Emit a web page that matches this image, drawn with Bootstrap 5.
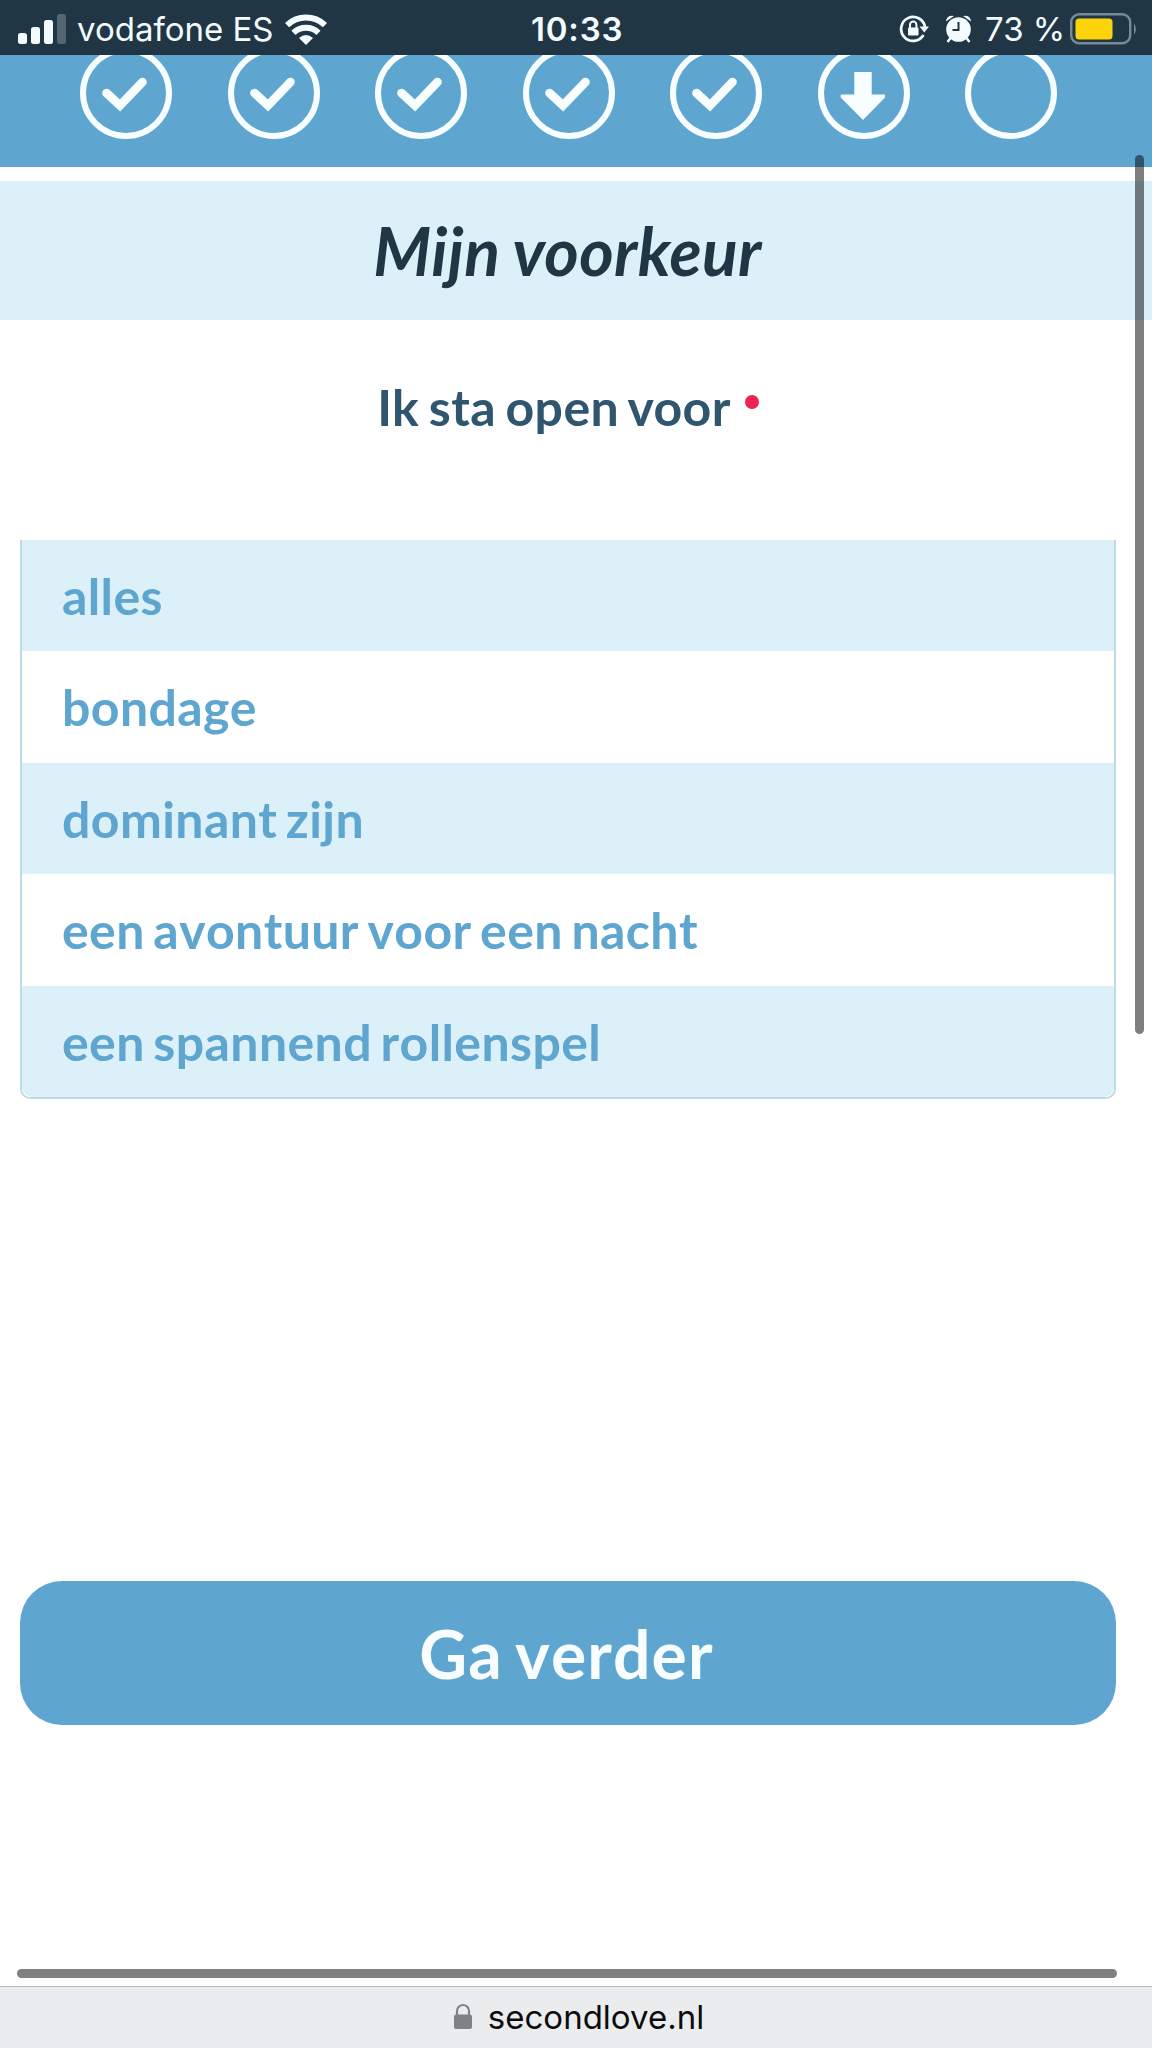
<!DOCTYPE html>
<html lang="nl">
<head>
<meta charset="utf-8">
<meta name="viewport" content="width=device-width, initial-scale=1">
<title>Mijn voorkeur</title>
<link href="https://cdn.jsdelivr.net/npm/bootstrap@5.3.0/dist/css/bootstrap.min.css" rel="stylesheet">
<style>
  body { font-family: Lato, "Open Sans", sans-serif; background: #fff; }
  .screen { width: 1152px; height: 2048px; }
  .status-bar { height: 55px; background: #203645; color: #f3fbff; font-family: Inter, "Liberation Sans", sans-serif; font-size: 33px; line-height: 55px; padding-top: 3px; }
  .status-side { flex: 1 1 0; }
  .status-left { padding-left: 18px; }
  .status-right { padding-right: 14px; }
  .carrier { width: 192px; margin-left: 11px; }
  .clock { width: 94px; padding-right: 3px; font-weight: 600; letter-spacing: .8px; }
  .level { width: 77px; margin-left: 13px; }
  .steps { height: 112px; background: #5ea6d0; padding: 0 95px 0 80px; }
  .step-ring { width: 92px; height: 92px; margin-top: -8px; }
  .title-band { height: 139px; margin-top: 14px; padding-right: 17px; background: #dcf0f9; color: #203645; }
  .title-band h1 { font-size: 66px; font-weight: 700; font-style: italic; line-height: 139px; letter-spacing: .35px; word-spacing: -1px; }
  .form-area { padding: 0 36px 0 20px; }
  .question { height: 220px; padding-top: 57px; color: #30566f; font-size: 50px; font-weight: 700; line-height: 60px; word-spacing: -3px; letter-spacing: .4px; }
  .required-dot { width: 14px; height: 14px; margin: 0 0 11px 14px; background: #ee2450; }
  .choices { height: 559px; border: 2px solid #bcdae7; border-top: 0; border-radius: 0 0 10px 10px; overflow: hidden; }
  .choices .list-group-item { flex: 1 1 0; border: 0; padding: 1px 0 0 40px; background: #fff; color: #5ea6d0; font-size: 50px; font-weight: 700; line-height: 110.400px; font-kerning: none; letter-spacing: .4px; word-spacing: -4px; }
  .choices .list-group-item:nth-child(odd) { background: #dcf0f9; }
  .next-btn { height: 144px; margin-top: 482px; border: 0; border-radius: 42px; background: #5ea6d0; color: #f8fdff; font-size: 66px; font-weight: 700; line-height: 1; font-kerning: none; letter-spacing: 1.100px; word-spacing: -5px; padding: 8px 15px 6px 12px; }
  .scroll-x { height: 9px; width: 1100px; margin: auto 0 8px 17px; background: #808080; }
  .address-bar { height: 62px; border-top: 1px solid #b5b8bb; background: #ebecee; color: #0c0c0e; font-family: Inter, "Liberation Sans", sans-serif; font-size: 33px; line-height: 58px; padding: 0 0 2px 6px; }
  .scroll-y { right: 8px; top: 155px; width: 9px; height: 879px; background: rgba(0,0,0,.5); }
</style>
</head>
<body>
<svg width="0" height="0" class="d-none">
  <symbol id="tick" viewBox="0 0 92 92"><circle cx="46" cy="46" r="43" fill="none" stroke="#f8feff" stroke-width="6"/><path d="M26.500 46 40 58.500 62.500 35" fill="none" stroke="#f8feff" stroke-width="8.600" stroke-linecap="round"/></symbol>
  <symbol id="arrow" viewBox="0 0 92 92"><circle cx="46" cy="46" r="43" fill="none" stroke="#f8feff" stroke-width="6"/><path d="M36.300 25h17.400v22.500H67v3L45 73 22.700 50.500v-3h13.600z" fill="#f8feff"/></symbol>
  <symbol id="ring" viewBox="0 0 92 92"><circle cx="46" cy="46" r="43" fill="none" stroke="#f8feff" stroke-width="6"/></symbol>
</svg>
<div class="screen position-relative overflow-hidden d-flex flex-column">
  <header class="status-bar d-flex align-items-center flex-shrink-0">
    <div class="status-side status-left d-flex align-items-center">
      <svg width="48" height="31" viewBox="0 0 48 31" fill="#f3fbff"><rect y="19" width="9" height="11" rx="2.500"/><rect x="13" y="13" width="9" height="17" rx="2.500"/><rect x="26" y="6" width="9" height="24" rx="2.500"/><rect x="39" y="0" width="9" height="30" rx="2.500" fill="#536673"/></svg>
      <span class="carrier text-nowrap">vodafone ES</span>
      <svg class="ms-3" width="42" height="31" viewBox="0 0 42 31" fill="none" stroke="#f3fbff" stroke-width="6"><path d="M2 11.200A27.500 27.500 0 0 1 40 11.200M8.500 18.800A18 18 0 0 1 33.500 18.800"/><path d="M14 24Q21 18 28 24L21 31z" fill="#f3fbff" stroke="none"/></svg>
    </div>
    <div class="clock text-nowrap text-center">10:33</div>
    <div class="status-side status-right d-flex align-items-center justify-content-end">
      <svg width="30" height="28" viewBox="0 0 30 28"><path d="M24.500 20A12 12 0 1 1 26 12" fill="none" stroke="#f3fbff" stroke-width="2.700"/><path d="M20.500 11.500H30L25.300 17.500z" fill="#f3fbff"/><rect x="9" y="12.500" width="10.500" height="8" rx="1" fill="#f3fbff"/><path d="M11 13v-3.200a3.200 3.200 0 0 1 6.400 0V13" fill="none" stroke="#f3fbff" stroke-width="2"/></svg>
      <svg class="ms-3" width="27" height="28" viewBox="0 0 27 28"><g fill="#f3fbff"><circle cx="13.500" cy="14.500" r="12.300"/><path d="M1 6.500Q1.500 0 9 1zM26 6.500Q25.500 0 18 1z"/></g><path d="m5.500 23-3 4M21.500 23l3 4" stroke="#f3fbff" stroke-width="2.500"/><path d="M13.500 7v8H7.500" fill="none" stroke="#203645" stroke-width="2"/></svg>
      <span class="level text-nowrap">73 %</span>
      <svg width="68" height="32" viewBox="0 0 68 32" class="ms-2"><rect x="1.200" y="1.200" width="59" height="29" rx="8" fill="none" stroke="#788a96" stroke-width="2.400"/><rect x="5.500" y="5.500" width="37" height="21" rx="3.500" fill="#fdd30c"/><path d="M64 10.500q4 5.500 0 11z" fill="#788a96"/></svg>
    </div>
  </header>
  <nav class="steps d-flex justify-content-between align-items-start overflow-hidden flex-shrink-0">
    <svg class="step-ring"><use href="#tick"/></svg>
    <svg class="step-ring"><use href="#tick"/></svg>
    <svg class="step-ring"><use href="#tick"/></svg>
    <svg class="step-ring"><use href="#tick"/></svg>
    <svg class="step-ring"><use href="#tick"/></svg>
    <svg class="step-ring"><use href="#arrow"/></svg>
    <svg class="step-ring"><use href="#ring"/></svg>
  </nav>
  <div class="title-band text-center flex-shrink-0"><h1 class="m-0">Mijn voorkeur</h1></div>
  <main class="form-area">
    <div class="question d-flex justify-content-center align-items-start">
      <div class="d-flex align-items-center"><span>Ik sta open voor</span><span class="required-dot rounded-circle"></span></div>
    </div>
    <ul class="choices list-group">
      <li class="list-group-item">alles</li>
      <li class="list-group-item">bondage</li>
      <li class="list-group-item">dominant zijn</li>
      <li class="list-group-item">een avontuur voor een nacht</li>
      <li class="list-group-item">een spannend rollenspel</li>
    </ul>
    <button type="button" class="next-btn btn w-100">Ga verder</button>
  </main>
  <div class="scroll-x rounded-pill flex-shrink-0"></div>
  <footer class="address-bar d-flex justify-content-center align-items-center flex-shrink-0">
    <svg width="18" height="27" viewBox="0 0 18 27" class="me-3"><rect y="11.500" width="18" height="14.500" rx="2" fill="#808186"/><path d="M3 12V8a6 6 0 0 1 12 0v4" fill="none" stroke="#808186" stroke-width="2.200"/></svg>
    <span>secondlove.nl</span>
  </footer>
  <div class="scroll-y position-absolute rounded-pill"></div>
</div>
<script src="https://cdn.jsdelivr.net/npm/bootstrap@5.3.0/dist/js/bootstrap.bundle.min.js"></script>
</body>
</html>
